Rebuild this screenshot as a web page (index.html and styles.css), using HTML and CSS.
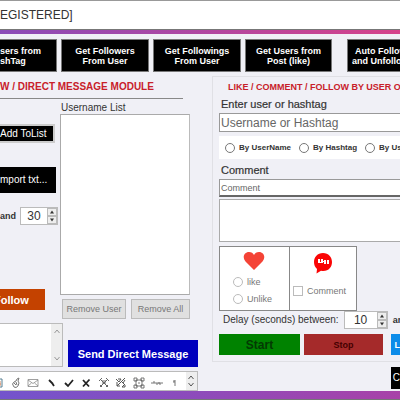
FILE: index.html
```html
<!DOCTYPE html>
<html lang="en">
<head>
<meta charset="utf-8">
<title>Direct message module</title>
<link rel="stylesheet" href="styles.css">
</head>
<body>
<div class="window">
  <header class="titlebar">EGISTERED]</header>
  <nav class="toolbar">
    <button class="tool first">sers from<br>shTag</button>
    <button class="tool">Get Followers<br>From User</button>
    <button class="tool">Get Followings<br>From User</button>
    <button class="tool">Get Users from<br>Post (like)</button>
    <button class="tool auto">Auto Follow<br>and Unfollow</button>
  </nav>
  <main class="content">
    <section class="messages">
      <h2 class="module-title">W / DIRECT MESSAGE MODULE</h2>
      <div class="columns">
        <div class="side">
          <button class="dark add">Add ToList</button>
          <button class="dark import">mport txt...</button>
          <div class="range">
            <label for="delay-max">and</label>
            <span class="spinner"><input id="delay-max" value="30"><span class="steps"><button class="step" aria-label="Up"><svg viewBox="0 0 8 8"><path d="M4 2.500 6 5.500H2z"/></svg></button><button class="step" aria-label="Down"><svg viewBox="0 0 8 8"><path d="M2 2.500H6L4 5.500z"/></svg></button></span></span>
          </div>
          <button class="follow">Follow</button>
        </div>
        <div class="users">
          <label for="user-list">Username List</label>
          <select id="user-list" class="listbox" size="10"></select>
          <div class="removers">
            <button class="plain">Remove User</button>
            <button class="plain">Remove All</button>
          </div>
        </div>
      </div>
      <div class="send-row">
        <div class="message">
          <textarea aria-label="Message"></textarea>
          <div class="scroll"><svg viewBox="0 0 8 8"><path d="M1.500 6 4 3 6.500 6"/></svg><svg viewBox="0 0 8 8"><path d="M1.500 2 4 5 6.500 2"/></svg></div>
        </div>
        <button class="send">Send Direct Message</button>
      </div>
      <div class="symbols">
        <svg viewBox="0 0 12 12"><path d="M6 2H10V10H6" stroke="#567f91"/><path d="M8 4V9M6 7H9" stroke="#d48a65"/></svg>
        <svg viewBox="0 0 12 12"><path d="M4 10 2.500 7 4 5 6 4 7 2 9 1 8 4 9 6 8 9 6 10.500zM4 6 6 8M6 5 7 8" stroke="#777"/></svg>
        <svg viewBox="0 0 12 12"><path d="M1 2.500H11V9.500H1zM1 3 6 6.500 11 3M1 9 4.500 6M11 9 7.500 6" stroke="#888" stroke-width=".8"/></svg>
        <svg viewBox="0 0 12 12"><path d="M4 3 8 7M7 6 9 9" stroke="#222" stroke-width="1.800"/></svg>
        <svg viewBox="0 0 12 12"><path d="M2 6 5 9 10 3" stroke="#222" stroke-width="1.800"/></svg>
        <svg viewBox="0 0 12 12"><path d="M3 3 9 9.500M9.500 2.500 3 9.500" stroke="#222" stroke-width="1.800"/></svg>
        <svg viewBox="0 0 12 12"><path d="M2 2 10 10M10 2 2 10M1 4 4 1M8 1 11 4M2 8 4 10M8 10 10 8M4 4H8M4 6H8" stroke="#666"/></svg>
        <svg viewBox="0 0 12 12"><path d="M1 2 4 5M10 1 2 9M3 2H6L4 5M7 5 10 8V10H7L9 8M2 5V9H5M10 3 8 6" stroke="#555"/></svg>
        <svg viewBox="0 0 12 12"><path d="M3 3H9V9H3zM1 1H4V4H1zM8 1H11V4H8zM1 8H4V11H1zM8 8H11V11H8zM5 6H7" stroke="#555" stroke-width=".8"/></svg>
        <svg viewBox="0 0 12 12"><path d="M0 6H12M2 5H4M5 7H7M8 5V7H10" stroke="#777"/></svg>
        <svg viewBox="0 0 12 12"><path d="M7 3V9M5 4H7M5 5H7" stroke="#777"/></svg>
        <div class="scroll dark-arrows"><svg viewBox="0 0 8 8"><path d="M1.500 6 4 3 6.500 6"/></svg><svg viewBox="0 0 8 8"><path d="M1.500 2 4 5 6.500 2"/></svg></div>
      </div>
    </section>
    <section class="engage">
      <div class="group">
        <h2 class="group-title">LIKE / COMMENT / FOLLOW BY USER OR</h2>
        <label class="caption" for="target">Enter user or hashtag</label>
        <input id="target" class="target" placeholder="Username or Hashtag">
        <div class="modes">
          <label><input type="radio" name="mode">By UserName</label>
          <label><input type="radio" name="mode">By Hashtag</label>
          <label><input type="radio" name="mode">By User</label>
        </div>
        <label class="caption" for="comment">Comment</label>
        <input id="comment" class="comment" placeholder="Comment">
        <textarea class="comments" aria-label="Comments"></textarea>
        <div class="actions">
          <div class="action likes">
            <svg class="heart" viewBox="0 0 22 20"><path d="M11 19 2.500 10.500C-1 6.500 1 1 6 1 8.500 1 10 2 11 4 12 2 13.500 1 16 1 21 1 23 6.500 19.500 10.500z" fill="#f44336"/></svg>
            <label><input type="radio" name="like">like</label>
            <label><input type="radio" name="like">Unlike</label>
          </div>
          <div class="action remarks">
            <svg class="bubble" viewBox="0 0 20 22"><path d="M10 1C4.500 1 1 5 1 10 1 13 2 15 4 17L3.500 21.500 8 18.700C15 20 19 15.500 19 10 19 5 15.500 1 10 1z" fill="#fa0505"/><path d="M5 7H7V11H5zM8 7H10V11H8zM11 8H13V12H11zM14 8H16V12H14zM7 10H8V11H7zM10 9H11V10H10z" fill="#fff"/></svg>
            <label><input type="checkbox">Comment</label>
          </div>
        </div>
        <div class="delay">
          <label for="delay-min">Delay (seconds) between:</label>
          <span class="spinner wide"><input id="delay-min" value="10"><span class="steps"><button class="step" aria-label="Up"><svg viewBox="0 0 8 8"><path d="M4 2.500 6 5.500H2z"/></svg></button><button class="step" aria-label="Down"><svg viewBox="0 0 8 8"><path d="M2 2.500H6L4 5.500z"/></svg></button></span></span>
          <b>and</b>
        </div>
        <div class="run">
          <button class="start">Start</button>
          <button class="stop">Stop</button>
          <button class="load">L</button>
        </div>
      </div>
      <button class="dark corner">C</button>
    </section>
  </main>
</div>
</body>
</html>
```
FILE: styles.css
```css
* { box-sizing: border-box; }
body {
  margin: 0;
  overflow: hidden;
  font: 9px/12px "Liberation Sans", Arial, sans-serif;
  color: #333;
}
button, input, textarea, select {
  font: inherit;
  color: inherit;
  margin: 0;
  padding: 0;
  border: 0;
  border-radius: 0;
}
button, label { white-space: nowrap; }
svg { fill: none; flex: none; }
h2 { margin: 0; font-weight: bold; white-space: nowrap; color: #c8202a; }

.window {
  display: flex;
  flex-direction: column;
  min-height: 100vh;
  background: #f0f0f6;
  border-top: 1px solid #999;
}
.window::after {
  content: "";
  height: 8px;
  margin-top: auto;
  background: linear-gradient(90deg, #7354cc, #a842a8);
  border-bottom: 1px solid #777;
}
.titlebar {
  height: 33px;
  font-size: 12px;
  line-height: 28px;
  background: #fff;
  border-bottom: 4px solid;
  border-image: linear-gradient(90deg, #8a4bb8, #d6428a) 1;
  box-shadow: inset 0 -1px #777;
}

.toolbar {
  display: grid;
  grid-template-columns: 57px 88px 88px 87px minmax(0, 1fr);
  column-gap: 4px;
  padding-top: 5px;
}
.tool {
  height: 33px;
  line-height: 10px;
  font-weight: bold;
  color: #fff;
  background: #000;
  border: 1px solid #777;
}
.first { text-align: left; border-left: 0; }
.auto {
  margin-left: 11px;
  padding-left: 4px;
  text-align: left;
  text-indent: 3px;
  overflow: hidden;
  border-right: 0;
}

.content { display: grid; grid-template-columns: minmax(0, 1fr) minmax(0, 1fr); }
.messages { display: flex; flex-direction: column; }
.module-title {
  margin: 8px 17px 0 0;
  padding: 1px 0 5px;
  font-size: 10px;
  line-height: 12px;
  border-bottom: 1px solid #888;
}
.columns { display: flex; gap: 4px; padding-right: 10px; }
.side {
  width: 56px;
  display: flex;
  flex-direction: column;
  align-items: flex-start;
}
.dark { color: #fff; background: #000; text-align: left; }
.add {
  width: 55px;
  height: 19px;
  margin-top: 25px;
  font-size: 10px;
  border: 2px solid #ccc;
  border-left: 0;
}
.import { width: 56px; height: 26px; margin-top: 24px; font-size: 10px; }
.range {
  display: flex;
  align-items: center;
  gap: 4px;
  margin-top: 14px;
  font-weight: bold;
}
.spinner {
  display: flex;
  width: 38px;
  height: 18px;
  background: #fff;
  border: 1px solid #bbb;
}
.spinner input {
  flex: 1;
  min-width: 0;
  text-align: center;
  font-size: 12px;
  font-weight: normal;
  background: none;
}
.steps { display: flex; flex-direction: column; width: 10px; background: #ddd; }
.step {
  flex: 1;
  display: grid;
  place-items: center;
  min-height: 0;
  background: #eee;
  border: 1px solid #bbb;
}
.step svg { width: 8px; height: 8px; margin: -1px; fill: #333; }
.follow {
  width: 45px;
  height: 21px;
  margin-top: 64px;
  text-indent: -6px;
  text-align: left;
  font-size: 11px;
  font-weight: bold;
  color: #fff;
  background: #c44200;
}
.users { flex: 1; display: flex; flex-direction: column; padding-top: 3px; font-size: 9px; }
.users label { font-size: 10px; padding-left: 1px; }
.listbox {
  height: 181px;
  background: #fff;
  border: 1px solid #aaa;
  border-right-color: #bbb;
}
.removers {
  display: grid;
  grid-template-columns: 64px 1fr;
  gap: 5px;
  margin-top: 4px;
  padding-left: 2px;
}
.plain { height: 20px; color: #777; background: #e0e0e0; border: 1px solid #bbb; }
.send-row { display: flex; align-items: flex-end; gap: 5px; padding-right: 2px; margin-top: 4px; }
.message {
  display: flex;
  width: 63px;
  height: 44px;
  background: #fff;
  border: 1px solid #bbb;
  border-left: 0;
}
.message textarea { flex: 1; min-width: 0; resize: none; }
.scroll {
  display: flex;
  flex-direction: column;
  justify-content: space-between;
  align-items: center;
  width: 11px;
  padding: 3px 0;
  background: #eee;
}
.scroll svg { width: 8px; height: 8px; stroke: #999; }
.send {
  flex: 1;
  height: 27px;
  font-size: 11px;
  font-weight: bold;
  color: #fff;
  background: #0000bd;
}
.symbols {
  display: flex;
  align-items: center;
  justify-content: space-between;
  height: 20px;
  margin: 4px 2px 0 0;
  background: #fff;
  border: 1px solid #bbb;
  border-left: 0;
}
.symbols > svg { width: 12px; height: 12px; margin-top: 3px; }
.symbols > svg:first-child { margin-left: -8px; }
.symbols .scroll { height: 100%; padding: 1px 0; }
.dark-arrows svg { stroke: #555; }

.engage { padding: 4px 0 0 12px; }
.group {
  padding: 4px 0 6px 6px;
  border: 1px solid #e0e0e5;
  border-right: 0;
  overflow: hidden;
}
.group-title { font-size: 9px; line-height: 12px; padding-left: 9px; }
.caption {
  display: block;
  padding: 5px 0 3px 2px;
  font-size: 11px;
  -webkit-text-stroke: 0.2px;
}
.target {
  display: block;
  width: 100%;
  height: 19px;
  padding-left: 1px;
  font-size: 12px;
  border: 1px solid #999;
  border-right: 0;
}
input::placeholder { color: #666; opacity: 1; }
.modes {
  display: flex;
  align-items: center;
  gap: 8px;
  height: 23px;
  margin-top: 4px;
  padding-left: 6px;
  background: #fff;
  font-size: 8px;
  font-weight: bold;
}
.modes label, .action label { display: flex; align-items: center; gap: 4px; }
input[type="radio"], input[type="checkbox"] {
  appearance: none;
  flex: none;
  width: 10px;
  height: 10px;
  background: #fff;
  border: 1px solid #777;
}
input[type="radio"] { border-radius: 50%; }
.comment {
  display: block;
  width: 100%;
  height: 18px;
  padding-left: 1px;
  border: 1px solid #999;
  border-right: 0;
  border-bottom: 2px solid #666;
}
.comments {
  display: block;
  width: 100%;
  height: 43px;
  margin-top: 2px;
  resize: none;
  background: #fff;
  border: 1px solid #aaa;
  border-right: 0;
}
.actions { display: grid; grid-template-columns: 71px 67px; height: 64px; margin-top: 4px; }
.action {
  display: flex;
  flex-direction: column;
  background: #fff;
  border: 1px solid #888;
  color: #777;
}
.action .action, .action input { border-color: #bbb; }
.remarks { border-left: 0; }
.likes label { margin: 0 0 5px 13px; }
.heart { width: 22px; height: 20px; margin: 4px 0 5px 23px; }
.bubble { width: 20px; height: 22px; margin: 5px 0 11px 23px; }
.remarks label { padding-left: 3px; }
.delay {
  display: flex;
  align-items: center;
  gap: 5px;
  margin-top: 1px;
  padding-left: 4px;
}
.delay label { font-size: 10px; }
.wide { width: 44px; flex: none; }
.run { display: flex; gap: 4px; margin-top: 5px; }
.run button { height: 21px; font-weight: bold; }
.start { width: 81px; color: #033a03; background: #008200; }
.run .start { font-size: 12px; }
.stop { width: 79px; color: #400; background: #a52a2a; }
.load {
  flex: 1;
  margin-left: 4px;
  overflow: hidden;
  text-align: right;
  color: #fff;
  background: #0c8ce9;
}
.corner {
  display: block;
  width: 9px;
  height: 22px;
  margin: 5px 0 0 auto;
  text-align: right;
  font-size: 10px;
}
```
